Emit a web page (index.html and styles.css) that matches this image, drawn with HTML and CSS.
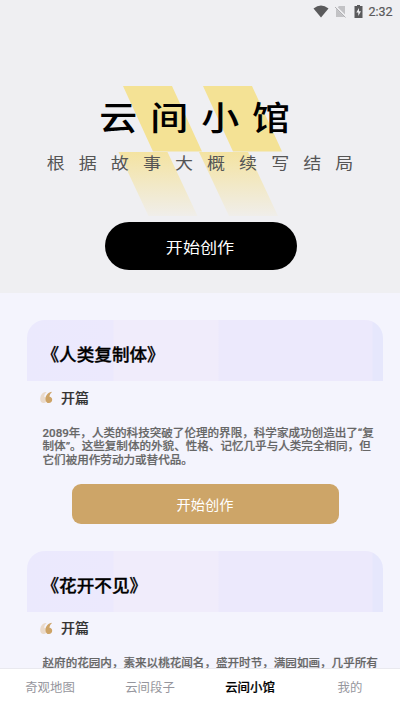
FILE: index.html
```html
<!DOCTYPE html>
<html lang="zh-CN">
<head>
<meta charset="utf-8">
<meta name="viewport" content="width=device-width, initial-scale=1">
<title>云间小馆</title>
<link rel="stylesheet" href="styles.css">
</head>
<body>
<div class="app">
  <header class="hero">
    <svg class="hero-art" viewBox="0 0 400 293" aria-hidden="true">
      <defs><linearGradient id="fade" x1="0" y1="0" x2="0" y2="1"><stop offset="0" stop-color="#f4e3a1"/><stop offset="1" stop-color="#f0eeea"/></linearGradient></defs>
      <path fill="#f4e295" d="M123 86h49l30 65.500h-49zM203 86h49l30 65.500h-49z"/>
      <path fill="url(#fade)" d="M118.500 152h49l30 64h-49zM199 152h49l30 64h-49z"/>
    </svg>
    <div class="status">
      <svg width="16" height="13" viewBox="0 0 16 13"><path fill="#5a5a5c" d="M.5 3.500Q8-2.500 15.500 3.500L8 12.500z"/></svg>
      <svg class="sim" width="11" height="13" viewBox="0 0 11 13"><path fill="#c2c2c5" d="M4 1h6v11H1V4z"/><path d="M0 1l11 11" stroke="#efeff2" stroke-width="2"/><path d="M0 2l10.500 10.500" stroke="#b0b0b3"/></svg>
      <svg class="battery" width="9" height="13" viewBox="0 0 9 13"><path fill="#5a5a5c" d="M3 0h3v1h2.500v12H.5V1H3z"/><path fill="#efeff2" d="M5 3L2.300 7.500h2V11L7 6.200H5z"/></svg>
      <span class="time">2:32</span>
    </div>
    <h1 class="brand">云间小馆</h1>
    <p class="tagline">根据故事大概续写结局</p>
    <button class="start"><span class="wide">开始创作</span></button>
  </header>
  <main class="stories">
    <article class="card">
      <h2 class="card-title">《人类复制体》</h2>
      <div class="opening"><svg class="quote" width="13" height="13" viewBox="0 0 13 13"><path fill="#eadacb" d="M5.800 1C2 1.600.2 4.600.2 8.200.2 10.600 1.500 12 3.600 12c2 0 3.200-1.300 3.200-3.200 0-1.700-1-2.800-2.500-2.900C4.300 4 5 2.400 6.600 1.200z"/><path fill="#cda366" d="M11.500.8C7.700 1.600 5.500 4.600 5.500 8.200c0 2.400 1.400 3.900 3.400 3.900s3.300-1.400 3.300-3.300c0-1.700-1.100-2.900-2.700-3 .1-1.900.8-3.300 2.300-4.500z"/></svg><h3>开篇</h3></div>
      <p class="excerpt">2089年，人类的科技突破了伦理的界限，科学家成功创造出了“复<br>制体”。这些复制体的外貌、性格、记忆几乎与人类完全相同，但<br>它们被用作劳动力或替代品。</p>
      <button class="create">开始创作</button>
    </article>
    <article class="card">
      <h2 class="card-title">《花开不见》</h2>
      <div class="opening"><svg class="quote" width="13" height="13" viewBox="0 0 13 13"><path fill="#eadacb" d="M5.800 1C2 1.600.2 4.600.2 8.200.2 10.600 1.500 12 3.600 12c2 0 3.200-1.300 3.200-3.200 0-1.700-1-2.800-2.500-2.900C4.300 4 5 2.400 6.600 1.200z"/><path fill="#cda366" d="M11.500.8C7.700 1.600 5.500 4.600 5.500 8.200c0 2.400 1.400 3.900 3.400 3.900s3.300-1.400 3.300-3.300c0-1.700-1.100-2.900-2.700-3 .1-1.900.8-3.300 2.300-4.500z"/></svg><h3>开篇</h3></div>
      <p class="excerpt">赵府的花园内，素来以桃花闻名，盛开时节，满园如画，几乎所有</p>
    </article>
  </main>
  <nav class="tabs"><a>奇观地图</a><a>云间段子</a><a class="active">云间小馆</a><a>我的</a></nav>
</div>
</body>
</html>
```
FILE: styles.css
```css
* { box-sizing: border-box; }
body, h1, h2, h3, p { margin: 0; }
body { font-family: Roboto, "Noto Sans CJK SC", sans-serif; background: #f4f4fd; }
button { border: 0; padding: 0; font-family: inherit; display: block; }
.app { height: 711px; display: flex; flex-direction: column; overflow: hidden; }
.hero { position: relative; height: 293px; flex: none; background: #efeff2; }
.hero-art { position: absolute; inset: 0; width: 400px; height: 293px; }
.status { position: relative; height: 22px; padding: 0 7.500px 0 0; display: flex; align-items: center; justify-content: flex-end; }
.sim { margin-left: 6px; }
.battery { margin-left: 8px; }
.time { margin-left: 5px; font-size: 12.500px; color: #59595b; font-weight: 400; -webkit-text-stroke: .2px; }
.brand { position: relative; margin-top: 73px; padding-left: 2px; height: 48px; line-height: 48px; font-size: 33px; font-weight: 500; letter-spacing: 11.300px; text-align: center; transform: scaleX(1.15); white-space: nowrap; color: #000; }
.tagline { position: relative; margin-top: 9px; height: 24px; line-height: 24px; padding-left: 12.500px; font-size: 16px; letter-spacing: 12.500px; text-align: center; transform: scaleX(1.125); white-space: nowrap; color: #555; }
.start { position: relative; width: 192px; height: 48px; margin: 46px auto 0 104.500px; border-radius: 24px; background: #000; color: #fff; font-size: 15px; }
.wide { display: inline-block; transform: scaleX(1.14); }
.stories { flex: 1; min-height: 0; overflow: hidden; padding: 27px 17px 0 27px; background: #f4f4fd; }
.card { height: 230.500px; }
.card-title { height: 61px; line-height: 70px; padding-left: 14.500px; border-radius: 18px 18px 0 0; font-size: 17.600px; font-weight: 500; -webkit-text-stroke: .3px; color: #000; background: linear-gradient(90deg, #ebe9fd 0, #ece9fd 86px, #f0ecfb 87px, #f0ecfb 191px, #ece9fc 192px, #ece9fc 345px, #e6e7fc 346px); }
.opening { display: flex; align-items: center; height: 33px; padding-left: 13px; }
.opening h3 { margin: -2px 0 0 8px; font-size: 14px; font-weight: 500; -webkit-text-stroke: .2px; color: #333; }
.excerpt { margin: 12.600px 0 0 15.500px; font-size: 11.570px; line-height: 13.600px; font-weight: 500; -webkit-text-stroke: .2px; color: #666; white-space: nowrap; }
.create { width: 267px; height: 40px; margin: 16.800px 0 0 44.500px; border-radius: 9px; background: #cda568; color: #fff; font-size: 14.200px; }
.tabs { flex: none; height: 43px; display: grid; grid-template-columns: repeat(4, 1fr); background: #fff; border-top: 1px solid #e9e9ef; text-align: center; font-size: 12.400px; line-height: 37px; color: #96969d; }
.active { color: #000; font-weight: 500; -webkit-text-stroke: .2px; }
```
